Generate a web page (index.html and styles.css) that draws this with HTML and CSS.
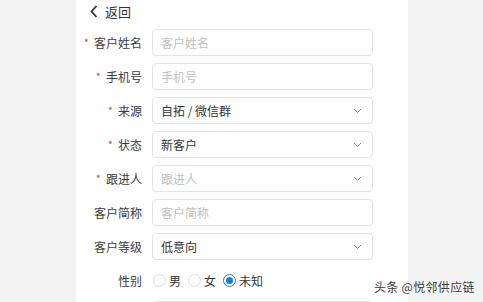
FILE: index.html
```html
<!DOCTYPE html>
<html lang="zh">
<head>
<meta charset="utf-8">
<link rel="stylesheet" href="styles.css">
</head>
<body>
<div class="panel">
  <div class="back">
    <svg class="back-icon" width="8" height="13" viewBox="0 0 8 13"><path d="M6.5 1 L1.5 6.5 L6.5 12" fill="none" stroke="#333" stroke-width="1.8"/></svg>
    <span>返回</span>
  </div>
  <form class="form">
    <label class="label"><i>*</i>客户姓名</label>
    <div class="field"><span class="ph">客户姓名</span></div>

    <label class="label"><i>*</i>手机号</label>
    <div class="field"><span class="ph">手机号</span></div>

    <label class="label"><i>*</i>来源</label>
    <div class="field select"><span>自拓 / 微信群</span><svg class="caret" width="9" height="6" viewBox="0 0 9 6"><path d="M1 1 L4.5 4.5 L8 1" fill="none" stroke="#888" stroke-width="1"/></svg></div>

    <label class="label"><i>*</i>状态</label>
    <div class="field select"><span>新客户</span><svg class="caret" width="9" height="6" viewBox="0 0 9 6"><path d="M1 1 L4.5 4.5 L8 1" fill="none" stroke="#888" stroke-width="1"/></svg></div>

    <label class="label"><i>*</i>跟进人</label>
    <div class="field select"><span class="ph">跟进人</span><svg class="caret" width="9" height="6" viewBox="0 0 9 6"><path d="M1 1 L4.5 4.5 L8 1" fill="none" stroke="#888" stroke-width="1"/></svg></div>

    <label class="label">客户简称</label>
    <div class="field"><span class="ph">客户简称</span></div>

    <label class="label">客户等级</label>
    <div class="field select"><span>低意向</span><svg class="caret" width="9" height="6" viewBox="0 0 9 6"><path d="M1 1 L4.5 4.5 L8 1" fill="none" stroke="#888" stroke-width="1"/></svg></div>

    <label class="label">性别</label>
    <div class="radios">
      <span class="radio"><span class="dot"></span>男</span>
      <span class="radio"><span class="dot"></span>女</span>
      <span class="radio"><span class="dot on"></span>未知</span>
    </div>

    <label class="label"></label>
    <div class="field"></div>
  </form>
</div>
<div class="watermark">头条 @悦邻供应链</div>
</body>
</html>
```
FILE: styles.css
```css
html, body {
  margin: 0;
  padding: 0;
  height: 302px;
  overflow: hidden;
}
body {
  background: #f3f3f3;
  font-family: "Noto Sans CJK SC", "Noto Sans", sans-serif;
  color: #333;
  position: relative;
}
.panel {
  margin-left: 76px;
  width: 332px;
  height: 302px;
  overflow: hidden;
  background: #fff;
}
.back {
  display: flex;
  align-items: center;
  height: 23px;
  padding-left: 14px;
  font-size: 13px;
  color: #333;
}
.back-icon {
  margin-right: 7px;
}
.form {
  margin: 6px 0 0 0;
  display: grid;
  grid-template-columns: 66px 221px;
  column-gap: 10px;
  row-gap: 7px;
  grid-auto-rows: 27px;
}
.label {
  display: flex;
  align-items: center;
  justify-content: flex-end;
  font-size: 12px;
  color: #3c3c3c;
  white-space: nowrap;
}
.label i {
  font-style: normal;
  color: #c0573a;
  font-size: 11px;
  margin-right: 5px;
  position: relative;
  top: -1px;
}
.field {
  box-sizing: border-box;
  border: 1px solid #e4e4e4;
  border-radius: 4px;
  display: flex;
  align-items: center;
  padding-left: 8px;
  padding-right: 10px;
  font-size: 12px;
  color: #333;
}
.field .ph {
  color: #c0c0c0;
}
.select {
  justify-content: space-between;
}
.radios {
  display: flex;
  align-items: center;
  font-size: 12px;
  color: #333;
  padding-left: 1px;
}
.radio {
  display: flex;
  align-items: center;
  margin-right: 7px;
}
.dot {
  box-sizing: border-box;
  width: 13px;
  height: 13px;
  border: 1px solid #dcdcdc;
  border-radius: 50%;
  margin-right: 3px;
  position: relative;
}
.dot.on {
  border-color: #1f7ae0;
}
.dot.on::after {
  content: "";
  position: absolute;
  left: 2px;
  top: 2px;
  width: 7px;
  height: 7px;
  border-radius: 50%;
  background: #1f7ae0;
}
.watermark {
  position: absolute;
  left: 374px;
  top: 278px;
  font-size: 12px;
  letter-spacing: 0.3px;
  color: #3a3a3a;
  text-shadow: 0 0 2px #fff, 0 0 2px #fff;
  white-space: nowrap;
}
```
